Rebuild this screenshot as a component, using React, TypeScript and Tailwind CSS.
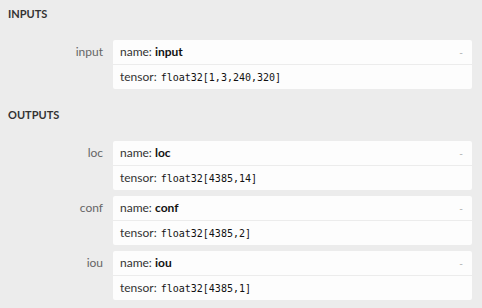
const sans = { fontFamily: 'Lato, "Noto Sans", sans-serif' };

type Arg = { label: string; name: string; tensor: string };

const inputs: Arg[] = [{ label: 'input', name: 'input', tensor: 'float32[1,3,240,320]' }];
const outputs: Arg[] = [
  { label: 'loc', name: 'loc', tensor: 'float32[4385,14]' },
  { label: 'conf', name: 'conf', tensor: 'float32[4385,2]' },
  { label: 'iou', name: 'iou', tensor: 'float32[4385,1]' },
];

const ArgRow = ({ arg }: { arg: Arg }) => {
  return (
    <div className="flex items-start">
      <div className="w-[103px] shrink-0 text-right text-[12px] leading-[24px] text-[#666]">{arg.label}</div>
      <div className="ml-[10px] mr-[10px] flex-1 rounded-[2px] bg-[#fdfdfd]">
        <div className="flex h-[24px] items-center justify-between px-[7px] text-[12px] text-[#333]">
          <span>
            name: <b className="font-bold text-[#111]">{arg.name}</b>
          </span>
          <span className="pr-[2px] text-[10px] text-[#aaa]">-</span>
        </div>
        <div className="h-px bg-[#ececec]" />
        <div className="flex h-[24px] items-center px-[7px] text-[12px] text-[#333]">
          <span>tensor:</span>
          <code className="ml-[4px] text-[10px] text-[#111]" style={{ fontFamily: '"DejaVu Sans Mono", monospace' }}>
            {arg.tensor}
          </code>
        </div>
      </div>
    </div>
  );
};

const Section = ({ title, items }: { title: string; items: Arg[] }) => {
  return (
    <div>
      <div className="h-[28px] px-[8px] text-[11px] font-bold leading-[28px] text-[#333]">{title}</div>
      <div className="flex flex-col gap-[6px] pt-[12px]">
        {items.map((a) => (
          <ArgRow key={a.name} arg={a} />
        ))}
      </div>
    </div>
  );
};

export default function App() {
  return (
    <div className="flex h-[308px] w-[482px] flex-col gap-[12px] bg-[#ececec]" style={sans}>
      <Section title="INPUTS" items={inputs} />
      <Section title="OUTPUTS" items={outputs} />
    </div>
  );
}
